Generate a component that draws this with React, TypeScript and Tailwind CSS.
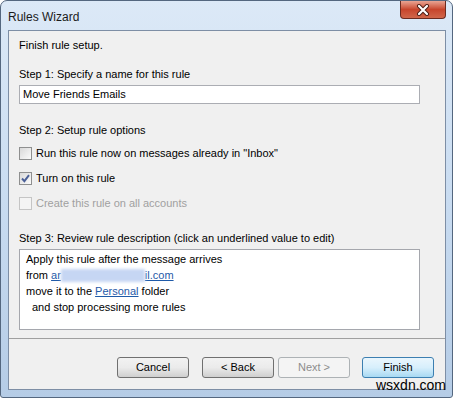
import React from 'react';

function CheckBox({ checked = false, disabled = false }: { checked?: boolean; disabled?: boolean }) {
    return (
        <span
            className={
                'relative w-[13px] h-[13px] shrink-0 border flex items-center justify-center ' +
                (disabled
                    ? 'border-[#c5c5c5] bg-[#f4f4f4]'
                    : 'border-[#8e8f8f] bg-gradient-to-br from-[#d9d9d9] to-[#fbfbfb]')
            }
        >
            {checked && (
                <svg width="11" height="11" viewBox="0 0 11 11">
                    <path d="M2 5.5 L4.4 8.2 L9 2.2" fill="none" stroke="#4a5f97" strokeWidth="1.9" />
                </svg>
            )}
        </span>
    );
}

function Btn({ label, variant = 'normal' }: { label: string; variant?: 'normal' | 'default' | 'disabled' }) {
    const look =
        variant === 'default'
            ? 'border-[#3c7fb1] bg-gradient-to-b from-[#eaf6fd] via-[#d7effc] to-[#a8d9f2] text-black'
            : variant === 'disabled'
            ? 'border-[#adb2b5] bg-[#f4f4f4] text-[#8d8d8d]'
            : 'border-[#707070] bg-gradient-to-b from-[#f2f2f2] via-[#ebebeb] to-[#cfcfcf] text-black';
    return (
        <div className={'w-[72px] h-[21px] rounded-[3px] border flex items-center justify-center text-[11px] ' + look}>
            {label}
        </div>
    );
}

export default function App() {
    return (
        <div className="w-[453px] h-[398px] overflow-hidden bg-white relative font-['Liberation_Sans',Arial,sans-serif] text-[11px] text-black">
            <div className="w-full h-full rounded-t-[7px] rounded-b-[3px] border border-[#54677f] bg-gradient-to-b from-[#dce9f7] via-[#c9dcf1] to-[#b5cce6] flex flex-col">
                {/* title bar */}
                <div className="h-[29px] flex items-start justify-between shrink-0">
                    <span className="pl-[7px] pt-[7px] text-[12px] text-[#1b1b1b]">Rules Wizard</span>
                    <div className="mr-[6px] w-[46px] h-[18px] rounded-b-[4px] border border-t-0 border-[#6b2b20] bg-gradient-to-b from-[#e8a493] via-[#c7452c] to-[#d0664a] flex items-center justify-center">
                        <svg width="14" height="12" viewBox="0 0 14 12">
                            <path d="M3 2 L11 10 M11 2 L3 10" stroke="#4a1c14" strokeWidth="4" strokeLinecap="round" />
                            <path d="M3 2 L11 10 M11 2 L3 10" stroke="#ffffff" strokeWidth="2.2" strokeLinecap="round" />
                        </svg>
                    </div>
                </div>

                {/* client area */}
                <div className="ml-[7px] mr-[6px] h-[360px] border border-[#7d8ea5] bg-[#f0f0f0] flex flex-col">
                    <div className="h-[307px] pl-[10px] pt-[6px] flex flex-col">
                        <div className="leading-[16px]">Finish rule setup.</div>
                        <div className="leading-[16px] mt-[13px]">Step 1: Specify a name for this rule</div>
                        <div className="mt-[3px] w-[401px] h-[19px] border border-[#abadb3] bg-white flex items-center pl-[3px]">
                            Move Friends Emails
                        </div>
                        <div className="leading-[16px] mt-[18px]">Step 2: Setup rule options</div>
                        <div className="mt-[7px] h-[16px] flex items-center gap-[4px]">
                            <CheckBox />
                            <span>Run this rule now on messages already in "Inbox"</span>
                        </div>
                        <div className="mt-[9px] h-[16px] flex items-center gap-[4px]">
                            <CheckBox checked />
                            <span>Turn on this rule</span>
                        </div>
                        <div className="mt-[9px] h-[16px] flex items-center gap-[4px]">
                            <CheckBox disabled />
                            <span className="text-[#a0a0a0]">Create this rule on all accounts</span>
                        </div>
                        <div className="leading-[16px] mt-[19px]">Step 3: Review rule description (click an underlined value to edit)</div>
                        <div className="mt-[3px] w-[401px] h-[81px] border border-[#a5a7ad] bg-white pl-[6px] pt-px leading-[16px]">
                            <div>Apply this rule after the message arrives</div>
                            <div className="flex items-center">
                                <span>from&nbsp;</span>
                                <span className="text-[#1f5aa8] underline">ar</span>
                                <span className="w-[84px] h-[13px] bg-[#c6d6f3] blur-[1.5px]" />
                                <span className="text-[#1f5aa8] underline">il.com</span>
                            </div>
                            <div>
                                move it to the <span className="text-[#1f5aa8] underline">Personal</span> folder
                            </div>
                            <div className="pl-[6px]">and stop processing more rules</div>
                        </div>
                    </div>
                    <div className="border-t border-[#a0a0a0] h-px bg-white" />
                    <div className="flex justify-end pr-[11px] pt-[18px]">
                        <Btn label="Cancel" />
                        <div className="ml-[13px]">
                            <Btn label="< Back" />
                        </div>
                        <div className="ml-[4px]">
                            <Btn label="Next >" variant="disabled" />
                        </div>
                        <div className="ml-[12px]">
                            <Btn label="Finish" variant="default" />
                        </div>
                    </div>
                </div>
            </div>
            <span className="absolute left-[376px] top-[377px] text-[14px] leading-[16px] text-black">wsxdn.com</span>
        </div>
    );
}
